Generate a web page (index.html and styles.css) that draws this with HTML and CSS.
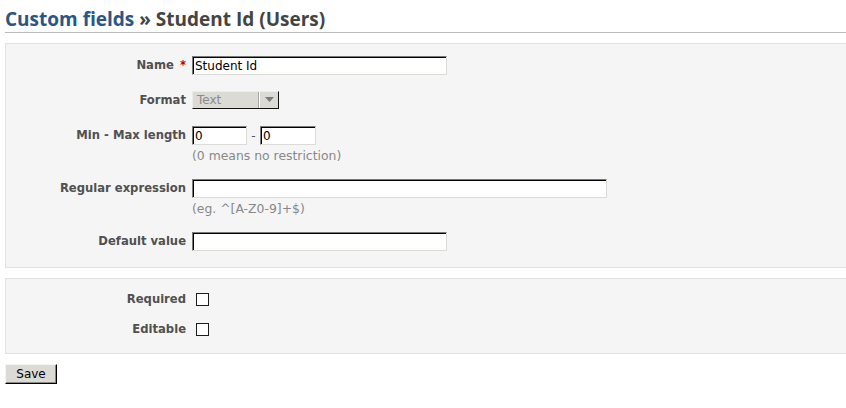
FILE: index.html
```html
<!DOCTYPE html>
<html>
<head>
<meta charset="utf-8">
<title>Custom fields » Student Id (Users)</title>
<link rel="stylesheet" href="styles.css">
</head>
<body>
<div class="page">
  <h2 class="title"><a class="crumb" href="#">Custom fields</a> » Student Id (Users)</h2>
  <form class="form">
    <div class="box">
      <div class="row">
        <label class="lbl">Name <span class="req">*</span></label>
        <div class="field"><input class="text w-long" type="text" value="Student Id"></div>
      </div>
      <div class="row">
        <label class="lbl">Format</label>
        <div class="field"><span class="select"><span class="select-text">Text</span><span class="select-btn"><svg width="9" height="6" viewBox="0 0 9 6"><path d="M0 0h9L4.5 5z" fill="#7a7a7a"/></svg></span></span></div>
      </div>
      <div class="row">
        <label class="lbl">Min - Max length</label>
        <div class="field">
          <div class="inline"><input class="text w-min" type="text" value="0"><span class="dash">-</span><input class="text w-max" type="text" value="0"></div>
          <em class="info">(0 means no restriction)</em>
        </div>
      </div>
      <div class="row">
        <label class="lbl">Regular expression</label>
        <div class="field">
          <input class="text w-xl" type="text" value="">
          <em class="info">(eg. ^[A-Z0-9]+$)</em>
        </div>
      </div>
      <div class="row">
        <label class="lbl">Default value</label>
        <div class="field"><input class="text w-long" type="text" value=""></div>
      </div>
    </div>
    <div class="box box-checks">
      <div class="row">
        <label class="lbl">Required</label>
        <div class="field"><span class="check"></span></div>
      </div>
      <div class="row">
        <label class="lbl">Editable</label>
        <div class="field"><span class="check"></span></div>
      </div>
    </div>
    <button class="save" type="button">Save</button>
  </form>
</div>
</body>
</html>
```
FILE: styles.css
```css
html, body {
  margin: 0;
  padding: 0;
  background: #fff;
  overflow: hidden;
}
body {
  font-family: "DejaVu Sans", Verdana, sans-serif;
  font-size: 12px;
  color: #484848;
}
.page {
  padding: 6px 0 0 5px;
}
.title {
  margin: 0 -10px 10px 0;
  height: 26px;
  line-height: 26px;
  font-family: "Open Sans", "DejaVu Sans", sans-serif;
  font-size: 19px;
  font-weight: 700;
  color: #444;
  border-bottom: 1px solid #bbb;
  white-space: nowrap;
}
.crumb {
  color: #2a5685;
  text-decoration: none;
}
.form {
  margin: 0;
}
.box {
  margin: 0 -10px 10px 0;
  background: #f5f5f5;
  border: 1px solid #e2e2e2;
  padding: 12px 0 16px 0;
  display: flex;
  flex-direction: column;
  gap: 16px;
}
.box-checks {
  padding: 11px 0 14px 0;
  gap: 11px;
}
.row {
  display: grid;
  grid-template-columns: 180px 1fr;
  column-gap: 6px;
  align-items: start;
}
.lbl {
  text-align: right;
  font-weight: 700;
  font-size: 11.6px;
  line-height: 19px;
  height: 19px;
  color: #505050;
  white-space: nowrap;
}
.req {
  color: #bb0000;
  margin-left: 2px;
}
.field {
  display: flex;
  flex-direction: column;
  align-items: flex-start;
}
.inline {
  display: flex;
  align-items: center;
}
.text {
  box-sizing: border-box;
  height: 19px;
  margin: 0;
  padding: 1px 2px 0 2px;
  font-family: "DejaVu Sans", sans-serif;
  font-size: 12px;
  color: #000;
  background: #fff;
  border: 1px solid;
  border-color: #7a7a7a #dcdcd6 #dcdcd6 #7a7a7a;
  box-shadow: inset 1px 1px 0 #000;
  outline: none;
}
.w-long { width: 255px; }
.w-xl { width: 415px; }
.w-min { width: 55px; }
.w-max { width: 56px; }
.dash {
  width: 13px;
  text-align: center;
  color: #555;
}
.info {
  display: block;
  font-style: normal;
  font-size: 12.4px;
  line-height: 14px;
  margin-top: 4px;
  color: #888;
  white-space: nowrap;
}
.select {
  box-sizing: border-box;
  display: flex;
  width: 87px;
  height: 18px;
  background: #dcdad5;
  border: 1px solid;
  border-color: #eeece8 #111 #111 #eeece8;
}
.select-text {
  flex: 1;
  padding-left: 4px;
  font-size: 12px;
  line-height: 16px;
  color: #8a8a8a;
}
.select-btn {
  width: 18px;
  display: flex;
  align-items: center;
  justify-content: center;
  border-left: 1px solid #fff;
  box-shadow: -1px 0 0 #a8a6a0;
}
.check {
  box-sizing: border-box;
  display: block;
  width: 13px;
  height: 13px;
  margin: 3px 0 0 4px;
  background: #fff;
  border: 1px solid #1c1c1c;
}
.save {
  box-sizing: border-box;
  display: block;
  margin: 1px 0 0 0;
  width: 52px;
  height: 20px;
  padding: 0;
  font-family: "DejaVu Sans", sans-serif;
  font-size: 12px;
  color: #000;
  background: #dcdad5;
  border: 1px solid;
  border-color: #f4f4f0 #000 #000 #f4f4f0;
  box-shadow: inset -1px -1px 0 #8a8882;
}
```
